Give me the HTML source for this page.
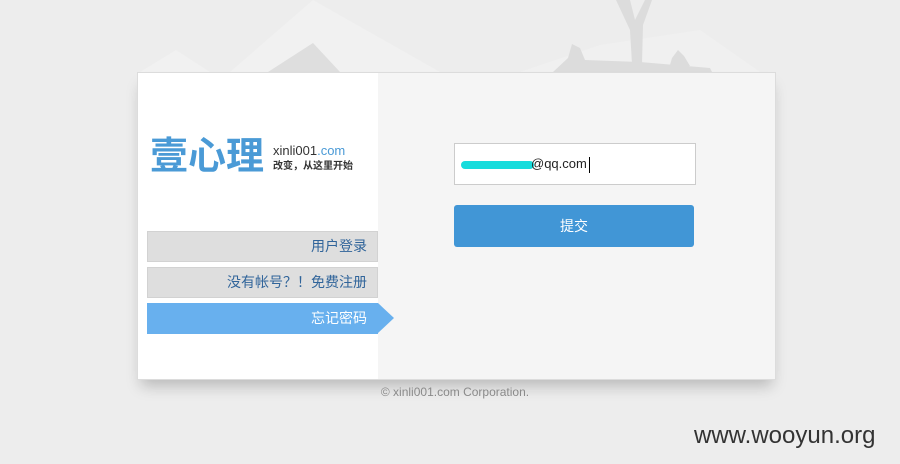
<!DOCTYPE html>
<html><head><meta charset="utf-8"><style>
*{margin:0;padding:0;box-sizing:border-box}
body{width:900px;height:464px;background:#ededed;position:relative;overflow:hidden;font-family:"Liberation Sans","Noto Sans CJK SC",sans-serif}
.card{position:absolute;left:137px;top:72px;width:639px;height:308px;background:#f5f5f5;border:1px solid #dcdcdc;box-shadow:0 10px 14px -4px rgba(0,0,0,0.22)}
.left{position:absolute;left:0;top:0;width:240px;height:306px;background:#fff}
.logo{position:absolute;left:12px;top:56px;font-size:38px;color:#4a9ad6;font-weight:bold;font-family:"Noto Sans CJK SC",sans-serif;line-height:48px}
.l1{position:absolute;left:135px;top:70px;font-size:13px;color:#333}
.l1 span{color:#4a9ad6}
.l2{position:absolute;left:135px;top:84px;font-size:10px;color:#333;font-weight:bold;font-family:"Noto Sans CJK SC",sans-serif}
.m{position:absolute;left:9px;width:231px;height:31px;background:#dedede;border:1px solid #d2d2d2;color:#30649a;font-size:14px;text-align:right;padding-right:10px;line-height:29px;font-family:"Noto Sans CJK SC",sans-serif}
.act{background:#68b0ee;border-color:#68b0ee;color:#fff}
.act:after{content:"";position:absolute;right:-17px;top:-1px;border-left:16px solid #68b0ee;border-top:15.5px solid transparent;border-bottom:15.5px solid transparent}
.inp{position:absolute;left:454px;top:143px;width:242px;height:42px;background:#fff;border:1px solid #ccc;font-size:13px;color:#222;line-height:40px}
.cur{position:absolute;left:134px;top:13px;width:1px;height:16px;background:#000}
.scr{position:absolute;left:6px;top:17px;width:73px;height:8px;background:#17dcdc;border-radius:4px}
.btn{position:absolute;left:454px;top:205px;width:240px;height:42px;background:#4196d6;border-radius:3px;color:#fff;text-align:center;line-height:42px;font-size:14px;font-family:"Noto Sans CJK SC",sans-serif}
.foot{position:absolute;left:0;width:910px;top:385px;text-align:center;font-size:12px;color:#8a8a8a}
.wy{position:absolute;left:694px;top:422px;font-size:24px;color:#333}
</style></head><body>
<svg width="900" height="80" style="position:absolute;left:0;top:0">
<polygon points="230,72 313,0 440,72" fill="#f1f1f1"/>
<polygon points="140,72 176,50 210,72" fill="#f1f1f1"/>
<polygon points="268,72 313,43 340,72" fill="#dedede"/>
<polygon points="520,72 600,45 700,30 760,72" fill="#f0f0f0"/>
<path d="M616,0 L630,0 L635,20 L645,0 L652,0 L643,25 L642,64 L632,64 L630,30 Z" fill="#dcdcdc"/>
<path d="M553,72 L568,58 L572,44 L580,48 L585,60 L640,62 L710,68 L712,72 Z" fill="#dcdcdc"/>
<path d="M668,72 L672,58 L678,50 L684,56 L690,66 Z" fill="#dcdcdc"/>
</svg>
<div class="card">
<div class="left">
<div class="logo">壹心理</div>
<div class="l1">xinli001<span>.com</span></div>
<div class="l2">改变，从这里开始</div>
<div class="m" style="top:158px">用户登录</div>
<div class="m" style="top:194px">没有帐号？！免费注册</div>
<div class="m act" style="top:230px">忘记密码</div>
</div>
</div>
<div class="inp"><div class="scr"></div><span style="position:absolute;left:76px;top:0">@qq.com</span><div class="cur"></div></div>
<div class="btn">提交</div>
<div class="foot">© xinli001.com Corporation.</div>
<div class="wy">www.wooyun.org</div>
</body></html>
